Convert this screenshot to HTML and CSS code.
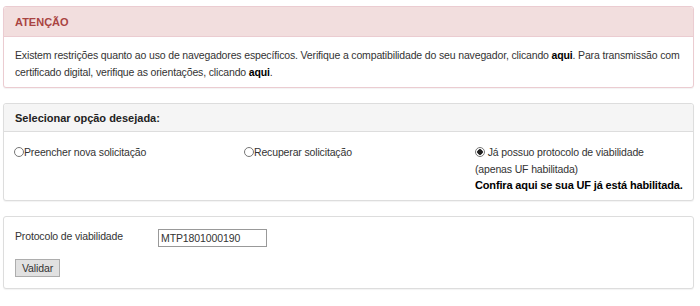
FILE: index.html
```html
<!DOCTYPE html>
<html lang="pt-BR">
<head>
    <meta charset="UTF-8">
    <title>Viabilidade - Solicitação</title>
    <link rel="stylesheet" href="styles.css">
</head>
<body>
    <div class="panel panel-danger">
        <div class="panel-heading">ATENÇÃO</div>
        <div class="panel-body">
            Existem restrições quanto ao uso de navegadores específicos. Verifique a compatibilidade do seu navegador, clicando <a href="#">aqui</a>. Para transmissão com certificado digital, verifique as orientações, clicando <a href="#">aqui</a>.
        </div>
    </div>

    <div class="panel panel-default">
        <div class="panel-heading">Selecionar opção desejada:</div>
        <div class="panel-body options">
            <label class="option"><input type="radio" name="opcao">Preencher nova solicitação</label>
            <label class="option"><input type="radio" name="opcao">Recuperar solicitação</label>
            <div class="option-wide">
                <label class="option"><input type="radio" name="opcao" checked> Já possuo protocolo de viabilidade<br>(apenas UF habilitada)</label>
                <a href="#" class="check-uf">Confira aqui se sua UF já está habilitada.</a>
            </div>
        </div>
    </div>

    <div class="panel panel-default">
        <div class="panel-body form">
            <div class="form-row">
                <label for="protocolo">Protocolo de viabilidade</label>
                <input type="text" id="protocolo" value="MTP1801000190">
            </div>
            <button class="btn">Validar</button>
        </div>
    </div>
</body>
</html>
```

FILE: styles.css
```css
* {
    box-sizing: border-box;
}

body {
    margin: 0;
    padding: 6px 6px 0 3px;
    font-family: 'Liberation Sans', Arial, sans-serif;
    font-size: 10.5px;
    letter-spacing: -0.15px;
    color: #333;
    background-color: #fff;
}

a {
    color: #000;
    font-weight: bold;
    text-decoration: none;
}

.panel {
    border: 1px solid #ddd;
    border-radius: 3px;
    margin-bottom: 15px;
    background-color: #fff;
    box-shadow: 0 1px 1px rgba(0, 0, 0, 0.05);
}

.panel-heading {
    height: 30px;
    padding: 0 11px;
    display: flex;
    align-items: center;
    font-size: 11px;
    letter-spacing: 0;
    font-weight: bold;
    border-bottom: 1px solid #ddd;
    border-radius: 3px 3px 0 0;
}

.panel-danger {
    border-color: #ebccd1;
}

.panel-danger .panel-heading {
    background-color: #f2dede;
    border-color: #ebccd1;
    color: #a94442;
}

.panel-default .panel-heading {
    height: 28px;
    background-color: #f5f5f5;
    color: #222;
}

.panel-body {
    padding: 10px 11px 6px;
    line-height: 17px;
}

.options {
    display: grid;
    grid-template-columns: 230px 231px 1fr;
    padding: 12px 8px 6px 10px;
    line-height: 16.5px;
}

.option {
    display: block;
    color: #333;
}

input[type="radio"] {
    appearance: none;
    width: 10px;
    height: 10px;
    margin: 0;
    border: 1px solid #777;
    border-radius: 50%;
    vertical-align: -1px;
    background-color: #fff;
}

input[type="radio"]:checked {
    background: radial-gradient(circle, #222 0 2.5px, #fff 3px);
}

.check-uf {
    display: block;
    font-size: 11px;
    letter-spacing: -0.15px;
    white-space: nowrap;
}

.form {
    padding: 12px 11px 11px;
}

.form-row {
    display: flex;
    align-items: center;
    margin-bottom: 12px;
}

.form-row label {
    width: 143px;
    margin-top: -2px;
}

#protocolo {
    width: 109px;
    height: 18px;
    padding: 0 2px;
    border: 1px solid #999;
    font-family: inherit;
    font-size: 10.5px;
    letter-spacing: -0.1px;
    color: #333;
}

.btn {
    height: 18px;
    padding: 0 6px;
    font-family: inherit;
    font-size: 10.5px;
    letter-spacing: -0.1px;
    color: #333;
    background-color: #e1e1e1;
    border: 1px solid #adadad;
    border-radius: 0;
}
```
